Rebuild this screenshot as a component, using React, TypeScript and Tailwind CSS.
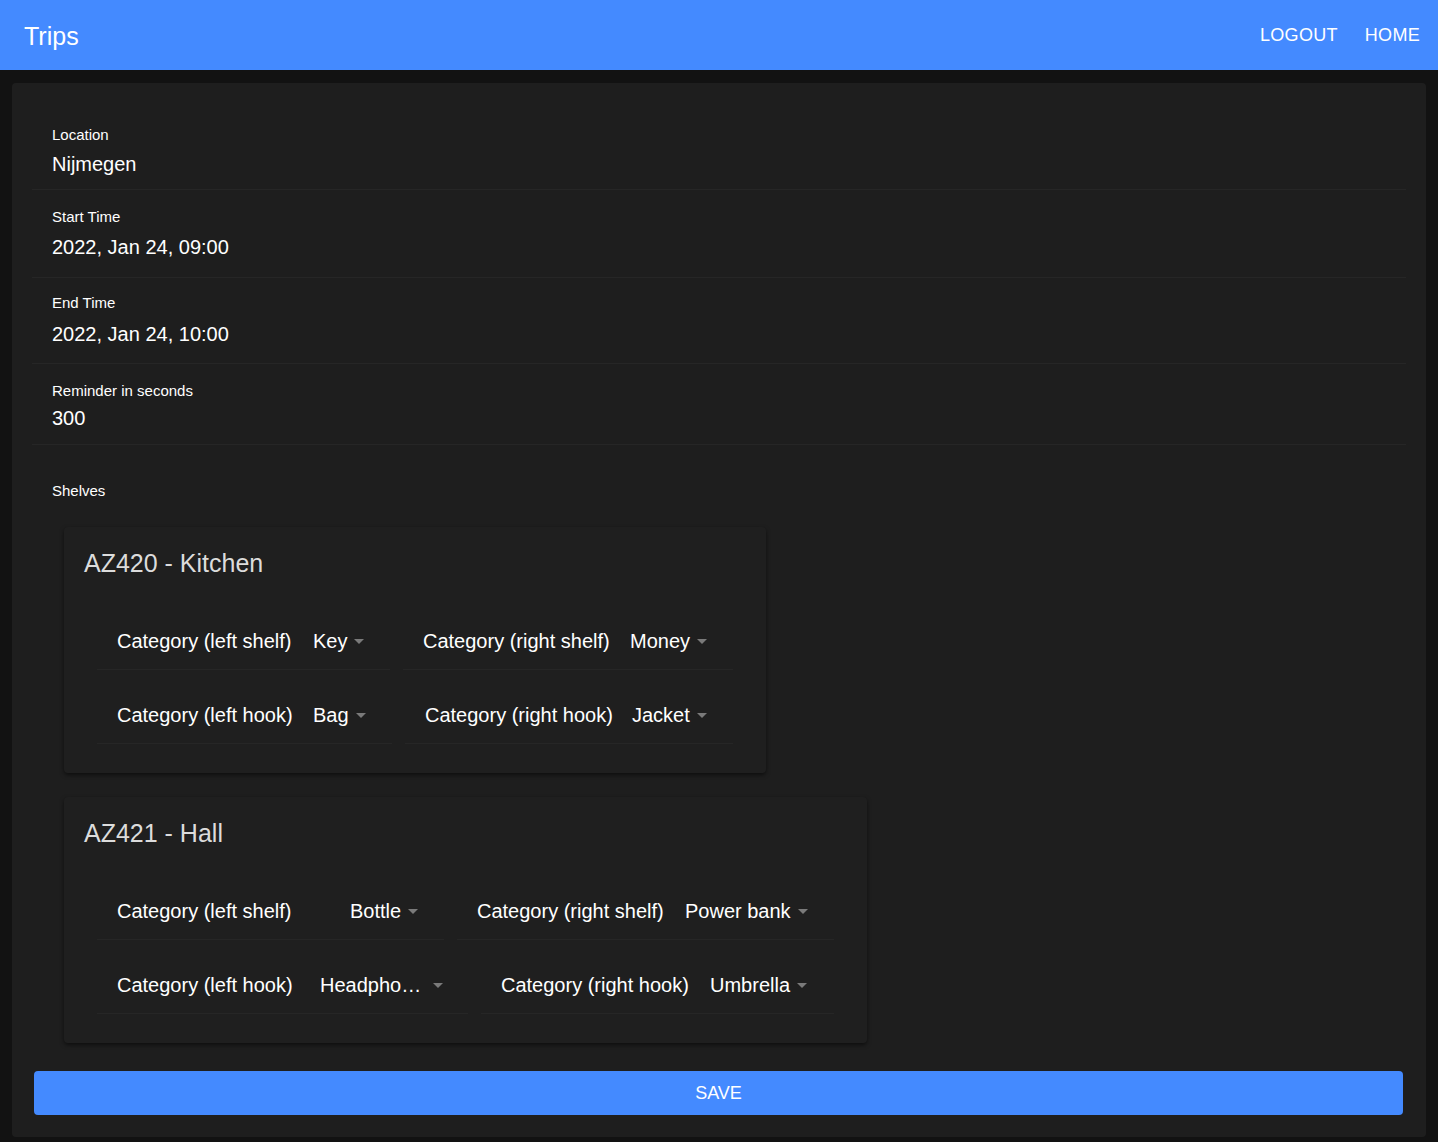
import React from 'react';

const FONT = { fontFamily: '"Liberation Sans", Arial, sans-serif' };

interface Field {
  label: string;
  value: string;
  width: number;
  labelWidth: number;
  wide?: boolean;
}

interface Shelf {
  title: string;
  rows: Field[][];
}

const shelves: Shelf[] = [
  {
    title: 'AZ420 - Kitchen',
    rows: [
      [
        { label: 'Category (left shelf)', value: 'Key', width: 293, labelWidth: 216 },
        { label: 'Category (right shelf)', value: 'Money', width: 330, labelWidth: 227 },
      ],
      [
        { label: 'Category (left hook)', value: 'Bag', width: 295, labelWidth: 216 },
        { label: 'Category (right hook)', value: 'Jacket', width: 328, labelWidth: 227 },
      ],
    ],
  },
  {
    title: 'AZ421 - Hall',
    rows: [
      [
        { label: 'Category (left shelf)', value: 'Bottle', width: 347, labelWidth: 253 },
        { label: 'Category (right shelf)', value: 'Power bank', width: 377, labelWidth: 228 },
      ],
      [
        { label: 'Category (left hook)', value: 'Headpho…', width: 371, labelWidth: 223, wide: true },
        { label: 'Category (right hook)', value: 'Umbrella', width: 353, labelWidth: 229 },
      ],
    ],
  },
];

// label / value pairs at the top of the form, spacing read off the screenshot
const details = [
  { label: 'Location', value: 'Nijmegen', pt: 'pt-[23px]', gap: 'mt-[8px]', pb: 'pb-[13px]' },
  { label: 'Start Time', value: '2022, Jan 24, 09:00', pt: 'pt-[18px]', gap: 'mt-[9px]', pb: 'pb-[18px]' },
  { label: 'End Time', value: '2022, Jan 24, 10:00', pt: 'pt-[16px]', gap: 'mt-[10px]', pb: 'pb-[17px]' },
  { label: 'Reminder in seconds', value: '300', pt: 'pt-[18px]', gap: 'mt-[6px]', pb: 'pb-[14px]' },
];

const DropArrow = () => (
  <svg width="10" height="5" viewBox="0 0 10 5" className="mt-[2px] shrink-0">
    <path d="M0 0 L5 5 L10 0 Z" fill="#7a7a7a" />
  </svg>
);

const SelectField: React.FC<{ field: Field }> = ({ field }) => (
  <div
    className="flex items-center h-[74px] pt-[16px] border-b border-[#262626]"
    style={{ width: field.width }}
  >
    <div className="pl-[20px] text-[20px] leading-[24px] text-white whitespace-nowrap" style={{ width: field.labelWidth }}>
      {field.label}
    </div>
    <div className="flex items-center">
      <span className="text-[20px] leading-[24px] text-white whitespace-nowrap">{field.value}</span>
      <span className={field.wide ? 'ml-[12px] flex' : 'ml-[7px] flex'}>
        <DropArrow />
      </span>
    </div>
  </div>
);

const ShelfCard: React.FC<{ shelf: Shelf }> = ({ shelf }) => (
  <div className="w-fit bg-[#1f1f1f] rounded-[4px] px-[33px] pt-[20px] pb-[29px] shadow-[0_2px_4px_rgba(0,0,0,0.55)]">
    <div className="-ml-[13px] text-[25px] leading-[32px] text-[#dcdcdc]">{shelf.title}</div>
    <div className="mt-[17px]">
      {shelf.rows.map((row, i) => (
        <div key={i} className="flex gap-[13px]">
          {row.map((f) => (
            <SelectField key={f.label} field={f} />
          ))}
        </div>
      ))}
    </div>
  </div>
);

export default function App() {
  return (
    <div className="min-h-[1142px] bg-[#121212] pb-[5px]" style={FONT}>
      <header className="h-[70px] bg-[#448aff] flex items-center justify-between pl-[24px] pr-[18px]">
        <span className="pt-[3px] text-[25px] text-white">Trips</span>
        <nav className="flex gap-[27px] text-[18px] text-white tracking-[0.3px]">
          <button>LOGOUT</button>
          <button>HOME</button>
        </nav>
      </header>

      <main className="mt-[13px] mx-[12px] bg-[#1e1e1e] rounded-[4px] px-[20px] pt-[20px] pb-[22px]">
        {details.map((d) => (
          <div key={d.label} className={`${d.pt} ${d.pb} border-b border-[#262626]`}>
            <div className="pl-[20px] text-[15px] leading-[18px] text-white">{d.label}</div>
            <div className={`${d.gap} pl-[20px] text-[20px] leading-[24px] text-white`}>{d.value}</div>
          </div>
        ))}

        <div className="pt-[37px] pl-[20px] text-[15px] leading-[18px] text-white">Shelves</div>

        <div className="mt-[27px] ml-[32px] flex flex-col gap-[24px]">
          {shelves.map((s) => (
            <ShelfCard key={s.title} shelf={s} />
          ))}
        </div>

        <button className="mt-[28px] ml-[2px] mr-[3px] w-[calc(100%-5px)] h-[44px] rounded-[4px] bg-[#448aff] text-white text-[18px]">
          SAVE
        </button>
      </main>
    </div>
  );
}
